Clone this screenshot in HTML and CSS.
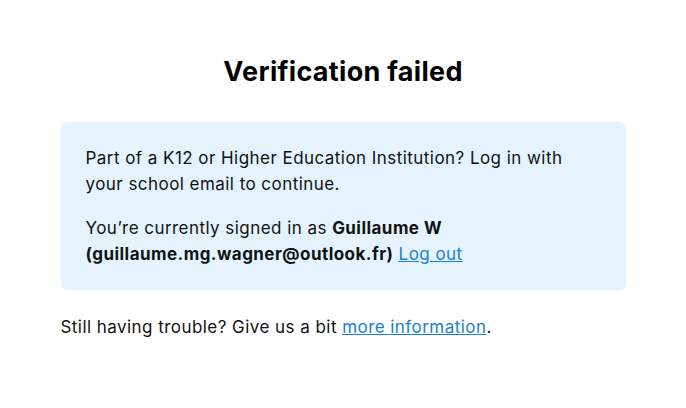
FILE: index.html
```html
<!DOCTYPE html>
<html lang="en">
<head>
<meta charset="utf-8">
<title>Verification failed</title>
<link rel="stylesheet" href="styles.css">
</head>
<body>
<main class="page">
  <h1 class="title">Verification failed</h1>
  <section class="notice">
    <p>Part of a K12 or Higher Education Institution? Log in with your school email to continue.</p>
    <p>You’re currently signed in as <strong>Guillaume W</strong> <strong>(guillaume.mg.wagner@outlook.fr)</strong> <a href="#">Log out</a></p>
  </section>
  <p class="help">Still having trouble? Give us a bit <a href="#">more information</a>.</p>
</main>
</body>
</html>
```

FILE: styles.css
```css
html, body {
  margin: 0;
  padding: 0;
  background: #ffffff;
}
body {
  font-family: Inter, "Noto Sans", sans-serif;
  color: #111111;
  font-size: 17px;
  line-height: 26px;
  letter-spacing: 0.45px;
}
.page {
  width: 565px;
  margin: 0 auto;
  padding-top: 54px;
}
.title {
  margin: 0 0 32px;
  text-align: center;
  font-size: 27px;
  line-height: 36px;
  font-weight: 700;
  letter-spacing: 0.3px;
  color: #000;
}
.notice {
  background: #e5f3fe;
  border-radius: 6px;
  padding: 23px 25px 23px;
}
.notice p {
  margin: 0;
}
.notice p + p {
  margin-top: 18px;
}
strong {
  font-weight: 700;
}
a {
  color: #1b7fd4;
  text-decoration: underline;
}
.help {
  margin: 24px 0 0;
}
```
